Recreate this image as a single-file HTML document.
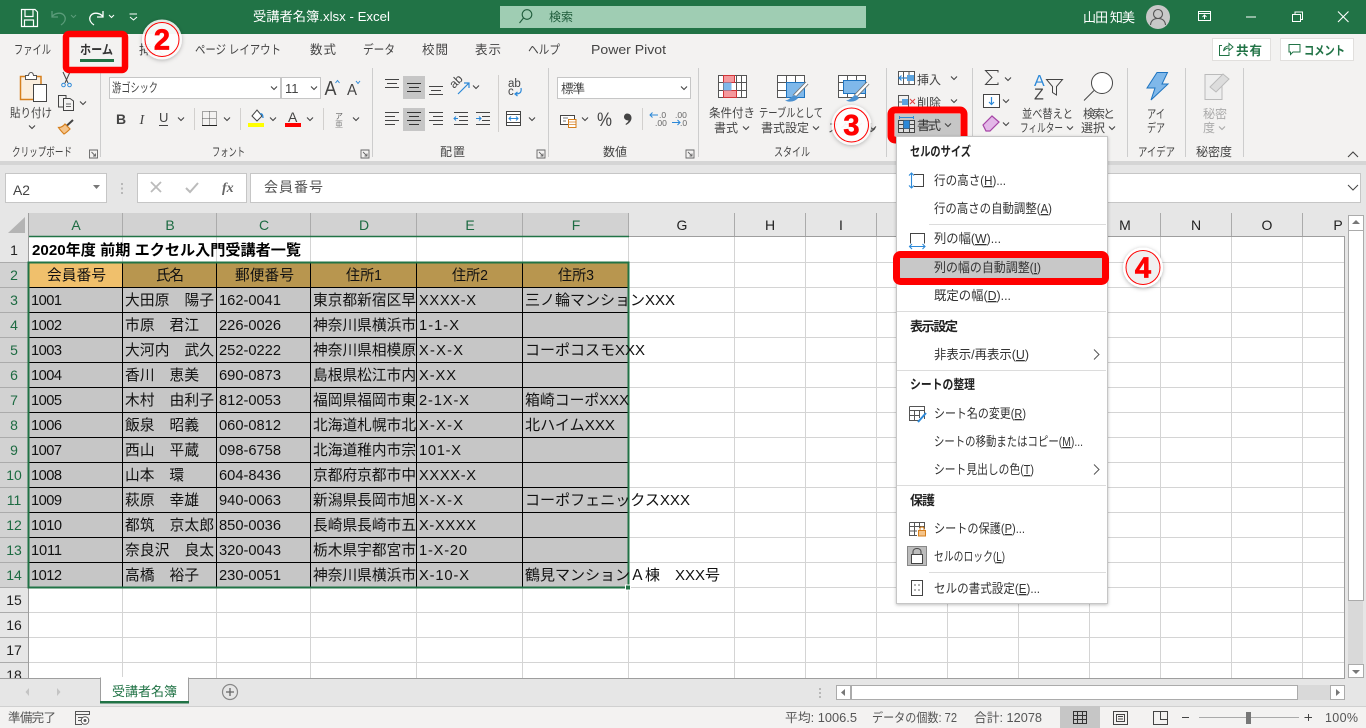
<!DOCTYPE html>
<html lang="ja"><head><meta charset="utf-8"><title>受講者名簿.xlsx - Excel</title>
<style>
html,body{margin:0;padding:0;width:1366px;height:728px;overflow:hidden;background:#fff}
svg{display:block}
text{font-family:"Liberation Sans","Noto Sans CJK JP",sans-serif;fill:#444;font-size:12px}
.w{fill:#fff;font-size:13px}
.t{font-size:12.5px;fill:#444}
.g{font-size:12px;fill:#444}
.c{font-size:14.67px;fill:#111}
.ch{font-size:14px;fill:#222;text-anchor:middle}
.chs{font-size:14px;fill:#1d6b42;text-anchor:middle}
.rh{font-size:14px;fill:#222;text-anchor:middle}
.rhs{font-size:14px;fill:#1d6b42;text-anchor:middle}
.m{font-size:13px;fill:#333}
.mb{font-size:13px;fill:#222;font-weight:bold}
.s{font-size:12.5px;fill:#555}
.u{text-decoration:underline}
.num{font-family:"Liberation Sans",sans-serif;font-weight:bold;fill:#f00;font-size:29px;text-anchor:middle;stroke:#f00;stroke-width:.7px}
</style></head><body>
<svg width="1366" height="728" viewBox="0 0 1366 728" xmlns="http://www.w3.org/2000/svg">
<defs>
<path id="cv" d="M-3 -1.5L0 1.5L3 -1.5" fill="none" stroke="#444" stroke-width="1.1"/>
<path id="cvg" d="M-3 -1.5L0 1.5L3 -1.5" fill="none" stroke="#aaa" stroke-width="1.1"/>
<path id="lau" d="M0 0H8V8H0ZM2 2L6 6M6 3.5V6H3.5" fill="none" stroke="#666" stroke-width=".9"/>
<filter id="sh" x="-30%" y="-30%" width="160%" height="160%"><feDropShadow dx="0" dy="1" stdDeviation="2" flood-color="#000" flood-opacity=".3"/></filter>
<filter id="ms" x="-5%" y="-5%" width="110%" height="110%"><feDropShadow dx="0" dy="1" stdDeviation="1.5" flood-color="#000" flood-opacity=".25"/></filter>
</defs>

<!-- backgrounds -->
<rect width="1366" height="728" fill="#e6e6e6"/>
<rect y="0" width="1366" height="34" fill="#217346"/>
<rect y="34" width="1366" height="127" fill="#f3f2f1"/>
<rect y="161" width="1366" height="4" fill="#d5d5d5"/>
<rect y="165" width="1366" height="48" fill="#e6e6e6"/>

<!-- title bar -->
<path d="M21.500 9.500H35L37.500 12V26.500H21.500ZM25 9.500V16.500H33V9.500M24.500 26.500V20H33.500V26.500" fill="none" stroke="#fff" stroke-width="1.200"/>
<path d="M52 11V17H58M52 16.500C56 12 63 12 65 17C66 20 64 23 61 25" fill="none" stroke="#5b9c7a" stroke-width="1.300"/>
<path d="M71 15l2.500 2.500L76 15" fill="none" stroke="#5b9c7a"/>
<path d="M103 11V17H97M103 16.500C99 12 92 12 90 17C89 20 91 23 94 25" fill="none" stroke="#fff" stroke-width="1.300"/>
<path d="M109 15l2.500 2.500L114 15" fill="none" stroke="#fff"/>
<path d="M129.500 14H137M130 17l3.500 3L137 17" fill="none" stroke="#fff"/>
<text x="253" y="21" class="w" textLength="137" lengthAdjust="spacingAndGlyphs">受講者名簿.xlsx  -  Excel</text>
<rect x="500" y="6" width="366" height="22" fill="#9fcdb3"/>
<circle cx="527" cy="14.500" r="4.800" fill="none" stroke="#1f5c3b" stroke-width="1.100"/>
<path d="M523.500 18L519.500 23" stroke="#1f5c3b" stroke-width="1.100"/>
<text x="549" y="21" style="font-size:12px;fill:#1f5c3b" textLength="24">検索</text>
<text x="1083" y="22" class="w" textLength="52">山田 知美</text>
<circle cx="1158" cy="17" r="12" fill="#c8c8c8"/>
<circle cx="1158" cy="14" r="4.500" fill="none" stroke="#555" stroke-width="1.100"/>
<path d="M1150.500 25C1151 20 1154 18.500 1158 18.500S1165 20 1165.500 25" fill="none" stroke="#555" stroke-width="1.100"/>
<path d="M1198.500 11.500H1210.500V20.500H1198.500ZM1198.500 13.500H1210.500M1204.500 19V15M1202.500 17L1204.500 15L1206.500 17" fill="none" stroke="#fff"/>
<path d="M1246 17H1256" stroke="#fff"/>
<path d="M1292.500 14.500H1300.500V21.500H1292.500ZM1295 14.500V12H1302.500V19.500H1300.500" fill="none" stroke="#fff"/>
<path d="M1338 11.500L1348.500 22M1348.500 11.500L1338 22" stroke="#fff" stroke-width="1.100"/>

<!-- tabs -->
<text x="14" y="54" class="t" textLength="37" lengthAdjust="spacingAndGlyphs">ファイル</text>
<text x="80" y="54" class="t" style="font-weight:bold;fill:#333" textLength="33" lengthAdjust="spacingAndGlyphs">ホーム</text>
<rect x="80" y="59" width="34" height="3" fill="#217346"/>
<text x="139" y="54" class="t" textLength="25" lengthAdjust="spacingAndGlyphs">挿入</text>
<text x="195" y="54" class="t" textLength="86" lengthAdjust="spacingAndGlyphs">ページ レイアウト</text>
<text x="310" y="54" class="t" textLength="26">数式</text>
<text x="363" y="54" class="t" textLength="32" lengthAdjust="spacingAndGlyphs">データ</text>
<text x="422" y="54" class="t" textLength="26">校閲</text>
<text x="475" y="54" class="t" textLength="26">表示</text>
<text x="528" y="54" class="t" textLength="32" lengthAdjust="spacingAndGlyphs">ヘルプ</text>
<text x="591" y="54" class="t" textLength="75" lengthAdjust="spacingAndGlyphs">Power Pivot</text>
<rect x="1212.500" y="38.500" width="58" height="22" fill="#fff" stroke="#e1dfdd"/>
<path d="M1222 45.500H1219.500V55.500H1229V52M1223.500 51C1224 47.500 1226 46 1229 46V43.500L1233 47L1229 50.500V48C1227 48 1225 49 1223.500 51Z" fill="none" stroke="#217346"/>
<text x="1236" y="55" style="font-size:12.500px;font-weight:bold;fill:#217346" textLength="26">共有</text>
<rect x="1280.500" y="38.500" width="73" height="22" fill="#fff" stroke="#e1dfdd"/>
<path d="M1289 44.500H1300V52H1293L1290.500 54.500V52H1289Z" fill="none" stroke="#217346"/>
<text x="1304" y="55" style="font-size:12.500px;font-weight:bold;fill:#217346" textLength="41" lengthAdjust="spacingAndGlyphs">コメント</text>

<!-- group separators -->
<path d="M100.500 68V157M372.500 68V157M548.500 68V157M698.500 68V157M886.500 68V157M972.500 68V157M1127.500 68V157M1185.500 68V157M1243.500 68V157" stroke="#cdcdcd"/>
<path d="M194.500 108V130M240.500 108V130M323.500 108V130M498.500 75V132M642.500 108V130" stroke="#d2d0ce"/>

<!-- clipboard -->
<path d="M20.500 76.500H41V99.500H20.500Z" fill="#fbeedd" stroke="#d67f1c" stroke-width="1.500"/>
<path d="M25.500 79.500V75.500H28.500C29 71.500 33 71.500 33.500 75.500H36.500V79.500Z" fill="#fff" stroke="#555"/>
<rect x="33.500" y="84.500" width="13" height="17" fill="#fff" stroke="#444"/>
<text x="10" y="117" class="g" textLength="42" lengthAdjust="spacingAndGlyphs">貼り付け</text>
<use href="#cv" x="32" y="127"/>
<path d="M63 72L68 83M70 72L65 83" stroke="#444"/><circle cx="63.500" cy="85" r="1.800" fill="none" stroke="#2b88d8"/><circle cx="69.500" cy="85" r="1.800" fill="none" stroke="#2b88d8"/>
<path d="M63 107H58.500V95.500H66V98M63 98.500H70L73.500 101V110.500H63.500V98.500Z" fill="#f3f2f1" stroke="#444"/><path d="M66 104H71M66 106.500H71" stroke="#666"/>
<use href="#cv" x="83" y="103"/>
<path d="M73 120L67 125.500" stroke="#444" stroke-width="2"/><path d="M58.500 127.500C61 127.500 63 126.500 65 124L70 129C68 131 66 133 64 134C62 132 60 130 58.500 127.500Z" fill="#f5c48a" stroke="#d67f1c" stroke-width="1.200"/>
<text x="12" y="156" class="g" textLength="60" lengthAdjust="spacingAndGlyphs">クリップボード</text>
<use href="#lau" x="89.500" y="150"/>

<!-- font -->
<rect x="109.500" y="77.500" width="171" height="21" fill="#fff" stroke="#c6c6c6"/>
<rect x="281.500" y="77.500" width="39" height="21" fill="#fff" stroke="#c6c6c6"/>
<text x="112" y="92" style="font-size:12.500px;fill:#444" textLength="46" lengthAdjust="spacingAndGlyphs">游ゴシック</text>
<use href="#cv" x="274" y="88"/>
<text x="285" y="93" style="font-size:13px;fill:#444">11</text>
<use href="#cv" x="314" y="88"/>
<text x="324.500" y="95" style="font-size:20px;fill:#444" textLength="12" lengthAdjust="spacingAndGlyphs">A</text>
<path d="M335.500 83l2 -2.500l2 2.500" fill="none" stroke="#2b88d8"/>
<text x="347" y="95" style="font-size:16px;fill:#444" textLength="10" lengthAdjust="spacingAndGlyphs">A</text>
<path d="M356 81l2 2.500l2 -2.500" fill="none" stroke="#2b88d8"/>
<text x="116" y="124" style="font-size:14px;font-weight:bold;fill:#444">B</text>
<text x="139.500" y="124" style="font-size:14px;font-style:italic;fill:#444;font-family:'Liberation Serif',serif">I</text>
<text x="159" y="122" style="font-size:13px;fill:#444">U</text><path d="M159 125.500H168" stroke="#444"/>
<use href="#cv" x="181" y="119"/>
<path d="M202.500 111.500H216.500V125.500H202.500ZM209.500 111.500V125.500M202.500 118.500H216.500" fill="none" stroke="#555" stroke-dasharray="1 1"/><path d="M202 125.500H217" stroke="#222"/>
<use href="#cv" x="227" y="119"/>
<path d="M252 116L257 110L262 116L257 121Z" fill="#fff" stroke="#444"/><path d="M260 114C262 113 263 115 263 118" stroke="#2b88d8" fill="none" stroke-width="1.300"/>
<rect x="248" y="123" width="16" height="4" fill="#ff0"/>
<use href="#cv" x="273" y="119"/>
<text x="288" y="122" style="font-size:14px;fill:#444">A</text>
<rect x="285" y="123" width="16" height="4" fill="#f00"/>
<use href="#cv" x="310" y="119"/>
<text x="335" y="119" style="font-size:8px;fill:#666">ア</text><text x="335" y="127" style="font-size:8px;fill:#888">亜</text>
<use href="#cv" x="356" y="119"/>
<text x="212" y="156" class="g" textLength="33" lengthAdjust="spacingAndGlyphs">フォント</text>
<use href="#lau" x="361" y="150"/>

<!-- alignment -->
<rect x="403" y="76" width="22" height="23" fill="#c6c6c6"/>
<rect x="403" y="108" width="22" height="23" fill="#c6c6c6"/>
<path d="M385 79.500H399M387 83.500H397M385 87.500H399" stroke="#444"/>
<path d="M407 83.500H421M409 87.500H419M407 91.500H421" stroke="#333"/>
<path d="M429 86.500H443M431 90.500H441M429 94.500H443" stroke="#444"/>
<path d="M385 112.500H399M385 116.500H395M385 120.500H399M385 124.500H395" stroke="#444"/>
<path d="M407 112.500H421M409 116.500H419M407 120.500H421M409 124.500H419" stroke="#333"/>
<path d="M429 112.500H443M433 116.500H443M429 120.500H443M433 124.500H443" stroke="#444"/>
<text x="454" y="89" style="font-size:12px;fill:#444" transform="rotate(-45 454 89)">ab</text>
<path d="M458 94L469 83M464 83H469V88" fill="none" stroke="#2b88d8" stroke-width="1.200"/>
<use href="#cv" x="476" y="87"/>
<path d="M454 112.500H468M459 116.500H468M459 120.500H468M454 124.500H468" stroke="#444"/><path d="M458 118.500H454M456 116.500L454 118.500L456 120.500" fill="none" stroke="#2b88d8"/>
<path d="M476 112.500H490M476 124.500H490M482 116.500H490M482 120.500H490" stroke="#444"/><path d="M476 118.500H481M479 116.500L481 118.500L479 120.500" fill="none" stroke="#2b88d8"/>
<text x="508" y="87" style="font-size:11.500px;fill:#444">ab</text><text x="508" y="95" style="font-size:11.500px;fill:#444">c</text>
<path d="M521 88C522 93 519 94 515 94M517.500 92L515 94L517.500 96" fill="none" stroke="#2b88d8" stroke-width="1.200"/>
<path d="M506.500 111.500H520.500V125.500H506.500ZM506.500 114.500H520.500M506.500 122.500H520.500" fill="#fff" stroke="#444"/><path d="M509 118.500H518M511 116.500L509 118.500L511 120.500M516 116.500L518 118.500L516 120.500" fill="none" stroke="#2b88d8"/>
<use href="#cv" x="532" y="119"/>
<text x="440" y="156" class="g" textLength="25">配置</text>
<use href="#lau" x="537" y="150"/>

<!-- number -->
<rect x="557.500" y="77.500" width="133" height="21" fill="#fff" stroke="#c6c6c6"/>
<text x="561" y="93" style="font-size:12.500px;fill:#444" textLength="24">標準</text>
<use href="#cv" x="684" y="88"/>
<rect x="560.500" y="115.500" width="14" height="9" fill="#fff" stroke="#444"/>
<path d="M563 118H568M563 121H566" stroke="#777"/>
<rect x="568.500" y="119.500" width="7.500" height="8" fill="#fff" stroke="#d67f1c"/>
<path d="M568.500 122H576M568.500 124.500H576" stroke="#d67f1c" stroke-width=".7"/>
<use href="#cv" x="585" y="119"/>
<text x="597" y="126" style="font-size:19px;fill:#444" textLength="15" lengthAdjust="spacingAndGlyphs">%</text>
<path d="M627 113.500C630 113.500 631.500 115.500 631.500 118C631.500 121 629 123.500 626 125L625.500 124C627 123 628.500 121.500 628.500 120.500C626 120.500 624 119 624 117C624 115 625.500 113.500 627 113.500Z" fill="#444"/>
<text x="659" y="118" style="font-size:8.500px;fill:#666">.0</text><text x="655" y="126" style="font-size:8.500px;fill:#666">.00</text>
<path d="M650 115H658M652.500 112.500L650 115L652.500 117.500" fill="none" stroke="#2b88d8"/>
<text x="675" y="118" style="font-size:8.500px;fill:#666">.00</text><text x="680" y="126" style="font-size:8.500px;fill:#666">.0</text>
<path d="M672 122.500H680M677.500 120L680 122.500L677.500 125" fill="none" stroke="#2b88d8"/>
<text x="603" y="156" class="g" textLength="24">数値</text>
<use href="#lau" x="686" y="150"/>

<!-- styles -->
<path d="M718.500 75.500H746.500V97.500H718.500ZM718.500 82.500H746.500M718.500 90.500H746.500M723.500 75.500V97.500M736.500 75.500V97.500M741.500 75.500V97.500" fill="#fff" stroke="#555"/>
<rect x="723.500" y="75.500" width="11" height="7" fill="#f4999d" stroke="#d13438"/>
<rect x="723.500" y="90.500" width="13" height="7" fill="#f4999d" stroke="#d13438"/>
<rect x="723.500" y="82.500" width="8" height="8" fill="#7fb8ea"/>
<text x="709" y="117" class="g" textLength="46" lengthAdjust="spacingAndGlyphs">条件付き</text>
<text x="714" y="132" class="g" textLength="24">書式</text>
<use href="#cv" x="746" y="128"/>
<path d="M777.500 75.500H804.500V97.500H777.500ZM777.500 82.500H804.500M777.500 90.500H804.500M786.500 75.500V97.500M795.500 75.500V97.500" fill="#fff" stroke="#555"/>
<rect x="786.500" y="82.500" width="18" height="15" fill="#7fb8ea" stroke="#1e74c0"/>
<path d="M807 83L794 96.500" stroke="#777" stroke-width="4"/><path d="M807 83L794 96.500" stroke="#fff" stroke-width="2.200"/><path d="M795 95C791 96 790 100 785 100.500C790 103 796 101 798 98Z" fill="#4a90d0"/>
<text x="759" y="117" class="g" textLength="64" lengthAdjust="spacingAndGlyphs">テーブルとして</text>
<text x="761" y="132" class="g" textLength="48">書式設定</text>
<use href="#cv" x="816" y="128"/>
<path d="M838.500 75.500H865.500V97.500H838.500ZM838.500 82.500H865.500M838.500 90.500H865.500M847.500 75.500V97.500M856.500 75.500V97.500" fill="#fff" stroke="#555"/>
<rect x="843.500" y="80.500" width="22" height="13" fill="#7fb8ea" stroke="#1e74c0"/>
<path d="M868 83L855 96.500" stroke="#777" stroke-width="4"/><path d="M868 83L855 96.500" stroke="#fff" stroke-width="2.200"/><path d="M856 95C852 96 851 100 846 100.500C851 103 857 101 859 98Z" fill="#4a90d0"/>
<text x="828" y="132" class="g">スタイル</text>
<use href="#cv" x="873" y="128"/>
<text x="774" y="156" class="g" textLength="36" lengthAdjust="spacingAndGlyphs">スタイル</text>

<!-- cells group -->
<path d="M898.500 71.500H914.500V84.500H898.500ZM898.500 78H914.500M903.500 71.500V84.500M909 71.500V84.500" fill="#fff" stroke="#555"/>
<path d="M899 78H906M901.500 75.500L899 78L901.500 80.500" fill="none" stroke="#2b88d8" stroke-width="1.200"/><rect x="907" y="75" width="7" height="6" fill="#5ba4e0"/>
<text x="917" y="84" class="g" textLength="24">挿入</text><use href="#cv" x="954" y="78"/>
<path d="M898.500 95.500H908.500V108.500H898.500ZM898.500 102H908.500" fill="none" stroke="#555"/>
<rect x="902" y="99" width="6" height="6" fill="#5ba4e0"/><path d="M910 99L915 104M915 99L910 104" stroke="#e04040"/>
<text x="917" y="107" class="g" textLength="24">削除</text><use href="#cv" x="954" y="101"/>
<rect x="891" y="110" width="73" height="30" rx="4" fill="#f3f2f1" stroke="#f00" stroke-width="7"/>
<rect x="895" y="114" width="65" height="22" fill="#c6c6c6"/>
<path d="M898.500 120.500H914.500V132.500H898.500ZM898.500 124.500H914.500M898.500 128.500H914.500M903.500 120.500V132.500M909.500 120.500V132.500" fill="#ddd" stroke="#444"/>
<rect x="903.500" y="120.500" width="6" height="8" fill="#2b88d8"/>
<path d="M900 117.500H913M899.500 116V119M913.500 116V119" stroke="#2b88d8"/>
<text x="917" y="130" style="font-size:13px;fill:#333" textLength="24">書式</text><use href="#cv" x="948" y="125"/>

<!-- editing -->
<path d="M998 72.500V70.500H985.500L992 77.500L985.500 84.500H998V82.500" fill="none" stroke="#444"/>
<use href="#cv" x="1008" y="79"/>
<rect x="983.500" y="94.500" width="16" height="13" fill="#fff" stroke="#444"/>
<path d="M991.500 97V104M989 102L991.500 104.500L994 102" fill="none" stroke="#2b88d8" stroke-width="1.200"/>
<use href="#cv" x="1006" y="101"/>
<path d="M983 125L992 116L999 122L990 131L986 131Z" fill="#e3b7e8" stroke="#a644a6" stroke-width="1.200"/>
<use href="#cv" x="1006" y="124"/>
<text x="1034" y="86" style="font-size:16px;fill:#2b88d8">A</text>
<text x="1034" y="99.500" style="font-size:16px;fill:#444">Z</text>
<path d="M1046.500 79.500H1062.500L1056.500 86.500V95L1052.500 92.500V86.500Z" fill="none" stroke="#444"/>
<text x="1022" y="118" class="g" textLength="51" lengthAdjust="spacingAndGlyphs">並べ替えと</text>
<text x="1020" y="132" class="g" textLength="43" lengthAdjust="spacingAndGlyphs">フィルター</text><use href="#cv" x="1070" y="128"/>
<circle cx="1102" cy="83" r="10.500" fill="#fff" stroke="#444"/><path d="M1094 90.500L1084 100.500" stroke="#444"/>
<text x="1083" y="118" class="g" textLength="32">検索と</text>
<text x="1081" y="132" class="g" textLength="24">選択</text><use href="#cv" x="1112" y="128"/>

<!-- ideas -->
<path d="M1157 72.500H1167.500L1162 84H1168L1151 100L1155 88H1147Z" fill="#7fb8ea" stroke="#1e74c0"/>
<text x="1147" y="118" class="g" textLength="18" lengthAdjust="spacingAndGlyphs">アイ</text>
<text x="1147" y="132" class="g" textLength="18" lengthAdjust="spacingAndGlyphs">デア</text>
<text x="1138" y="156" class="g" textLength="37" lengthAdjust="spacingAndGlyphs">アイデア</text>

<!-- sensitivity -->
<path d="M1205 74.500H1222V99.500H1205Z" fill="#eee" stroke="#bbb"/><path d="M1210 87L1223 74L1229 79L1216 92Z" fill="#ddd" stroke="#bbb"/>
<text x="1203" y="118" style="font-size:12px;fill:#aaa" textLength="24">秘密</text>
<text x="1203" y="132" style="font-size:12px;fill:#aaa" textLength="12">度</text><use href="#cvg" x="1222" y="128"/>
<text x="1196" y="156" class="g" textLength="36">秘密度</text>
<path d="M1348 157L1353 152L1358 157" fill="none" stroke="#444" stroke-width="1.100"/>

<!-- formula bar -->
<rect x="5.500" y="173.500" width="101" height="29" fill="#fff" stroke="#c6c6c6"/>
<text x="13" y="195" style="font-size:14px;fill:#444" textLength="17" lengthAdjust="spacingAndGlyphs">A2</text>
<path d="M93 185H100L96.500 189Z" fill="#777"/>
<path d="M122 183v2M122 187.500v2M122 192v2" stroke="#a8a8a8" stroke-width="1.500"/>
<rect x="137.500" y="173.500" width="109" height="29" fill="#fff" stroke="#c6c6c6"/>
<path d="M151 182L161 192M161 182L151 192" stroke="#bbb" stroke-width="1.800"/>
<path d="M186 188L190 192L198 183" fill="none" stroke="#bbb" stroke-width="2"/>
<text x="222" y="192" style="font-size:14px;font-style:italic;font-weight:bold;fill:#666;font-family:'Liberation Serif',serif">fx</text>
<rect x="250.500" y="173.500" width="1110" height="29" fill="#fff" stroke="#c6c6c6"/>
<text x="264" y="192" style="font-size:14px;fill:#555" textLength="59">会員番号</text>
<path d="M1348 185L1353 190L1358 185" fill="none" stroke="#444"/>

<!-- sheet -->
<rect x="29" y="237" width="1315" height="441" fill="#fff"/>
<rect x="0" y="213" width="1345" height="23" fill="#e6e6e6"/>
<rect x="0" y="237" width="28" height="441" fill="#e6e6e6"/>
<path d="M25 217V233H8Z" fill="#b4b4b4"/>
<rect x="29" y="213" width="600" height="23" fill="#d2d2d2"/>
<rect x="0" y="262" width="28" height="325" fill="#d2d2d2"/>
<path d="M122.500 237V678M216.500 237V678M310.500 237V678M416.500 237V678M522.500 237V678M628.500 237V678M734.500 237V678M805.500 237V678M876.500 237V678M947.500 237V678M1018.500 237V678M1089.500 237V678M1160.500 237V678M1231.500 237V678M1302.500 237V678" stroke="#d4d4d4"/>
<path d="M29 262.500H1344M29 287.500H1344M29 312.500H1344M29 337.500H1344M29 362.500H1344M29 387.500H1344M29 412.500H1344M29 437.500H1344M29 462.500H1344M29 487.500H1344M29 512.500H1344M29 537.500H1344M29 562.500H1344M29 587.500H1344M29 612.500H1344M29 637.500H1344M29 662.500H1344" stroke="#d4d4d4"/>
<path d="M122.500 213V236M216.500 213V236M310.500 213V236M416.500 213V236M522.500 213V236M628.500 213V236M734.500 213V236M805.500 213V236M876.500 213V236M947.500 213V236M1018.500 213V236M1089.500 213V236M1160.500 213V236M1231.500 213V236M1302.500 213V236" stroke="#ababab"/>
<path d="M0 262.500H28M0 287.500H28M0 312.500H28M0 337.500H28M0 362.500H28M0 387.500H28M0 412.500H28M0 437.500H28M0 462.500H28M0 487.500H28M0 512.500H28M0 537.500H28M0 562.500H28M0 587.500H28M0 612.500H28M0 637.500H28M0 662.500H28" stroke="#ababab"/>
<path d="M28.500 213V678M629 236.500H1344.500V678" fill="none" stroke="#9e9e9e"/>
<path d="M29 236.500H629" stroke="#217346" stroke-width="1.500"/>
<rect x="29" y="263" width="600" height="24" fill="#b8964f"/>
<rect x="29" y="263" width="94" height="24" fill="#f0c06c"/>
<rect x="29" y="288" width="600" height="299" fill="#c6c6c6"/>
<path d="M29 287.500H629M29 312.500H629M29 337.500H629M29 362.500H629M29 387.500H629M29 412.500H629M29 437.500H629M29 462.500H629M29 487.500H629M29 512.500H629M29 537.500H629M29 562.500H629" stroke="#000"/>
<path d="M122.500 263V587M216.500 263V587M310.500 263V587M416.500 263V587M522.500 263V587" stroke="#000"/>
<rect x="28.500" y="262.500" width="600" height="325" fill="none" stroke="#217346" stroke-width="2"/>
<rect x="625.500" y="585" width="5" height="5" fill="#217346" stroke="#fff"/>

<!-- column letters -->
<text x="76" y="230" class="chs">A</text><text x="170" y="230" class="chs">B</text><text x="264" y="230" class="chs">C</text><text x="364" y="230" class="chs">D</text><text x="470" y="230" class="chs">E</text><text x="576" y="230" class="chs">F</text>
<text x="682" y="230" class="ch">G</text><text x="770" y="230" class="ch">H</text><text x="841" y="230" class="ch">I</text><text x="912" y="230" class="ch">J</text><text x="1125" y="230" class="ch">M</text><text x="1196" y="230" class="ch">N</text><text x="1267" y="230" class="ch">O</text><text x="1338" y="230" class="ch">P</text>
<!-- row numbers -->
<text x="14" y="255" class="rh">1</text><text x="14" y="280" class="rhs">2</text><text x="14" y="305" class="rhs">3</text><text x="14" y="330" class="rhs">4</text><text x="14" y="355" class="rhs">5</text><text x="14" y="380" class="rhs">6</text><text x="14" y="405" class="rhs">7</text><text x="14" y="430" class="rhs">8</text><text x="14" y="455" class="rhs">9</text><text x="14" y="480" class="rhs">10</text><text x="14" y="505" class="rhs">11</text><text x="14" y="530" class="rhs">12</text><text x="14" y="555" class="rhs">13</text><text x="14" y="580" class="rhs">14</text><text x="14" y="605" class="rh">15</text><text x="14" y="630" class="rh">16</text><text x="14" y="655" class="rh">17</text><text x="14" y="680" class="rh">18</text>
<rect x="0" y="678" width="1366" height="28" fill="#e6e6e6"/>
<path d="M0 678.500H1345" stroke="#9e9e9e"/>

<!-- cell text -->
<text x="32" y="255" class="c" style="font-weight:bold;fill:#000" textLength="269" lengthAdjust="spacingAndGlyphs">2020年度 前期 エクセル入門受講者一覧</text>
<text x="47" y="280" class="c" textLength="59">会員番号</text><text x="156" y="280" class="c" textLength="28">氏名</text><text x="235" y="280" class="c" textLength="59">郵便番号</text><text x="346" y="280" class="c" textLength="36" lengthAdjust="spacingAndGlyphs">住所1</text><text x="452" y="280" class="c" textLength="36" lengthAdjust="spacingAndGlyphs">住所2</text><text x="558" y="280" class="c" textLength="36" lengthAdjust="spacingAndGlyphs">住所3</text>

<text x="31" y="305" class="c" textLength="31">1001</text><text x="125" y="305" class="c" textLength="89">大田原　陽子</text><text x="219" y="305" class="c" textLength="62">162-0041</text><text x="313" y="305" class="c" textLength="103">東京都新宿区早</text><text x="419" y="305" class="c" textLength="57">XXXX-X</text><text x="525" y="305" class="c" textLength="150" lengthAdjust="spacingAndGlyphs">三ノ輪マンションXXX</text>
<text x="31" y="330" class="c" textLength="31">1002</text><text x="125" y="330" class="c" textLength="74">市原　君江</text><text x="219" y="330" class="c" textLength="62">226-0026</text><text x="313" y="330" class="c" textLength="103">神奈川県横浜市</text><text x="419" y="330" class="c" textLength="40">1-1-X</text>
<text x="31" y="355" class="c" textLength="31">1003</text><text x="125" y="355" class="c" textLength="89">大河内　武久</text><text x="219" y="355" class="c" textLength="62">252-0222</text><text x="313" y="355" class="c" textLength="103">神奈川県相模原</text><text x="419" y="355" class="c" textLength="44">X-X-X</text><text x="525" y="355" class="c" textLength="120" lengthAdjust="spacingAndGlyphs">コーポコスモXXX</text>
<text x="31" y="380" class="c" textLength="31">1004</text><text x="125" y="380" class="c" textLength="74">香川　恵美</text><text x="219" y="380" class="c" textLength="62">690-0873</text><text x="313" y="380" class="c" textLength="103">島根県松江市内</text><text x="419" y="380" class="c" textLength="37">X-XX</text>
<text x="31" y="405" class="c" textLength="31">1005</text><text x="125" y="405" class="c" textLength="89">木村　由利子</text><text x="219" y="405" class="c" textLength="62">812-0053</text><text x="313" y="405" class="c" textLength="103">福岡県福岡市東</text><text x="419" y="405" class="c" textLength="50">2-1X-X</text><text x="525" y="405" class="c" textLength="104" lengthAdjust="spacingAndGlyphs">箱崎コーポXXX</text>
<text x="31" y="430" class="c" textLength="31">1006</text><text x="125" y="430" class="c" textLength="74">飯泉　昭義</text><text x="219" y="430" class="c" textLength="62">060-0812</text><text x="313" y="430" class="c" textLength="103">北海道札幌市北</text><text x="419" y="430" class="c" textLength="44">X-X-X</text><text x="525" y="430" class="c" textLength="90" lengthAdjust="spacingAndGlyphs">北ハイムXXX</text>
<text x="31" y="455" class="c" textLength="31">1007</text><text x="125" y="455" class="c" textLength="74">西山　平蔵</text><text x="219" y="455" class="c" textLength="62">098-6758</text><text x="313" y="455" class="c" textLength="103">北海道稚内市宗</text><text x="419" y="455" class="c" textLength="42">101-X</text>
<text x="31" y="480" class="c" textLength="31">1008</text><text x="125" y="480" class="c" textLength="59">山本　環</text><text x="219" y="480" class="c" textLength="62">604-8436</text><text x="313" y="480" class="c" textLength="103">京都府京都市中</text><text x="419" y="480" class="c" textLength="57">XXXX-X</text>
<text x="31" y="505" class="c" textLength="31">1009</text><text x="125" y="505" class="c" textLength="74">萩原　幸雄</text><text x="219" y="505" class="c" textLength="62">940-0063</text><text x="313" y="505" class="c" textLength="103">新潟県長岡市旭</text><text x="419" y="505" class="c" textLength="44">X-X-X</text><text x="525" y="505" class="c" textLength="165" lengthAdjust="spacingAndGlyphs">コーポフェニックスXXX</text>
<text x="31" y="530" class="c" textLength="31">1010</text><text x="125" y="530" class="c" textLength="89">都筑　京太郎</text><text x="219" y="530" class="c" textLength="62">850-0036</text><text x="313" y="530" class="c" textLength="103">長崎県長崎市五</text><text x="419" y="530" class="c" textLength="57">X-XXXX</text>
<text x="31" y="555" class="c" textLength="31">1011</text><text x="125" y="555" class="c" textLength="89">奈良沢　良太</text><text x="219" y="555" class="c" textLength="62">320-0043</text><text x="313" y="555" class="c" textLength="103">栃木県宇都宮市</text><text x="419" y="555" class="c" textLength="48">1-X-20</text>
<text x="31" y="580" class="c" textLength="31">1012</text><text x="125" y="580" class="c" textLength="74">高橋　裕子</text><text x="219" y="580" class="c" textLength="62">230-0051</text><text x="313" y="580" class="c" textLength="103">神奈川県横浜市</text><text x="419" y="580" class="c" textLength="50">X-10-X</text><text x="525" y="580" class="c" textLength="195" lengthAdjust="spacingAndGlyphs">鶴見マンションＡ棟　XXX号</text>

<!-- vertical scrollbar -->
<rect x="1348" y="230" width="15" height="434" fill="#d9d9d9"/>
<rect x="1348.500" y="215.500" width="15" height="15" fill="#fff" stroke="#ababab"/>
<path d="M1352 224H1360L1356 220Z" fill="#777"/>
<rect x="1348.500" y="230.500" width="15" height="370" fill="#fff" stroke="#ababab"/>
<rect x="1348.500" y="664.500" width="15" height="13" fill="#fff" stroke="#ababab"/>
<path d="M1352 670H1360L1356 674Z" fill="#777"/>

<!-- sheet tabs -->
<path d="M29 688L25.500 692L29 696Z" fill="#c4c4c4"/><path d="M57 688L60.500 692L57 696Z" fill="#c4c4c4"/>
<path d="M100.500 703V678H188.500V703" fill="#fff" stroke="#9e9e9e"/>
<rect x="101" y="677" width="87" height="3" fill="#fff"/>
<rect x="100" y="701" width="89" height="2.500" fill="#217346"/>
<text x="112" y="696" style="font-size:13px;fill:#217346" textLength="65">受講者名簿</text>
<circle cx="230" cy="692" r="7.500" fill="none" stroke="#888" stroke-width="1.200"/><path d="M226 692H234M230 688V696" stroke="#666" stroke-width="1.300"/>
<path d="M820 688v2M820 692v2M820 696v2" stroke="#a8a8a8" stroke-width="1.500"/>

<!-- horizontal scrollbar -->
<rect x="836" y="685" width="494" height="15" fill="#d9d9d9"/>
<rect x="836.500" y="685.500" width="14" height="14" fill="#fff" stroke="#ababab"/>
<path d="M845 689V696L841 692.500Z" fill="#777"/>
<rect x="851.500" y="685.500" width="446" height="14" fill="#fff" stroke="#ababab"/>
<rect x="1330.500" y="685.500" width="14" height="14" fill="#fff" stroke="#ababab"/>
<path d="M1336 689V696L1340 692.500Z" fill="#777"/>

<!-- status bar -->
<rect y="706" width="1366" height="22" fill="#f3f2f1"/><path d="M0 706.500H1366" stroke="#d0d0d0"/>
<text x="8" y="722" class="s" textLength="48">準備完了</text>
<path d="M75.500 711.500H89.500V714.500H75.500ZM75.500 714.500V724.500H82M78 717.500H83M78 720.500H81" fill="none" stroke="#555"/><circle cx="85" cy="720.500" r="3.800" fill="#fff" stroke="#555"/><circle cx="85" cy="720.500" r="1.500" fill="#555"/>
<text x="785" y="722" class="s" textLength="72" lengthAdjust="spacingAndGlyphs">平均: 1006.5</text>
<text x="872" y="722" class="s" textLength="85" lengthAdjust="spacingAndGlyphs">データの個数: 72</text>
<text x="974" y="722" class="s" textLength="68" lengthAdjust="spacingAndGlyphs">合計: 12078</text>
<rect x="1060" y="706" width="40" height="22" fill="#c6c6c6"/>
<path d="M1073.500 711.500H1086.500V723.500H1073.500ZM1073.500 715.500H1086.500M1073.500 719.500H1086.500M1077.500 711.500V723.500M1082.500 711.500V723.500" fill="none" stroke="#333"/>
<path d="M1113.500 711.500H1127.500V724.500H1113.500ZM1116.500 714.500H1124.500V721.500H1116.500ZM1118 716.500H1123M1118 719H1123" fill="none" stroke="#444"/>
<path d="M1153.500 711.500H1167.500V724.500H1153.500ZM1160.500 711.500V719.500H1167.500" fill="none" stroke="#444"/>
<path d="M1182 717.500H1189M1304.500 717.500H1312M1308.500 714V721" stroke="#444"/>
<path d="M1199 717.500H1299" stroke="#aaa"/>
<rect x="1246" y="712" width="5" height="12" fill="#777"/>
<text x="1325" y="722" class="s" textLength="33">100%</text>

<!-- red callout -->
<rect x="66" y="34" width="59" height="36" rx="3" fill="none" stroke="#f00" stroke-width="6.500"/>

<!-- dropdown menu -->
<rect x="896.500" y="136.500" width="211" height="467" fill="#fff" stroke="#c6c6c6" filter="url(#ms)"/>
<text x="910" y="156" class="mb" textLength="61" lengthAdjust="spacingAndGlyphs">セルのサイズ</text>
<path d="M911.500 173V188M909 175.500L911.500 173L914 175.500M909 185.500L911.500 188L914 185.500" fill="none" stroke="#2b88d8" stroke-width="1.100"/>
<path d="M914 174.500H923.500V186.500H914" fill="none" stroke="#444"/>
<text x="934" y="185" class="m" textLength="72" lengthAdjust="spacingAndGlyphs">行の高さ(<tspan class="u">H</tspan>)...</text>
<text x="934" y="213" class="m" textLength="118" lengthAdjust="spacingAndGlyphs">行の高さの自動調整(<tspan class="u">A</tspan>)</text>
<path d="M929 224.500H1106" stroke="#dcdcdc"/>
<path d="M910.500 243.500V233.500H924.500V243.500" fill="none" stroke="#444"/>
<path d="M909.500 246.500H925M912 244L909.500 246.500L912 249M922.500 244L925 246.500L922.500 249" fill="none" stroke="#2b88d8" stroke-width="1.100"/>
<text x="934" y="243" class="m" textLength="67" lengthAdjust="spacingAndGlyphs">列の幅(<tspan class="u">W</tspan>)...</text>
<rect x="896.500" y="254.500" width="209" height="27" rx="4" fill="#c8c8c8" stroke="#f00" stroke-width="7"/>
<text x="934" y="272" class="m" textLength="107" lengthAdjust="spacingAndGlyphs">列の幅の自動調整(<tspan class="u">I</tspan>)</text>
<text x="934" y="300" class="m" textLength="77" lengthAdjust="spacingAndGlyphs">既定の幅(<tspan class="u">D</tspan>)...</text>
<path d="M897 311.500H1106" stroke="#dcdcdc"/>
<text x="910" y="331" class="mb" textLength="48">表示設定</text>
<text x="934" y="359" class="m" textLength="95" lengthAdjust="spacingAndGlyphs">非表示/再表示(<tspan class="u">U</tspan>)</text>
<path d="M1094 349.500L1099 354.500L1094 359.500" fill="none" stroke="#555"/>
<path d="M897 370.500H1106" stroke="#dcdcdc"/>
<text x="910" y="389" class="mb" textLength="65" lengthAdjust="spacingAndGlyphs">シートの整理</text>
<path d="M909.500 406.500H924.500V419M909.500 406.500V420.500H919M909.500 410.500H924.500M909.500 415.500H920M914.500 410.500V420.500M919.500 410.500V418" fill="none" stroke="#555"/>
<path d="M918 422L926 413" stroke="#2b88d8" stroke-width="2"/>
<text x="934" y="418" class="m" textLength="92" lengthAdjust="spacingAndGlyphs">シート名の変更(<tspan class="u">R</tspan>)</text>
<text x="934" y="446" class="m" textLength="149" lengthAdjust="spacingAndGlyphs">シートの移動またはコピー(<tspan class="u">M</tspan>)...</text>
<text x="934" y="474" class="m" textLength="100" lengthAdjust="spacingAndGlyphs">シート見出しの色(<tspan class="u">T</tspan>)</text>
<path d="M1094 464.500L1099 469.500L1094 474.500" fill="none" stroke="#555"/>
<path d="M897 485.500H1106" stroke="#dcdcdc"/>
<text x="910" y="505" class="mb" textLength="25">保護</text>
<path d="M909.500 522.500H924.500V529M909.500 522.500V535.500H917M909.500 526.500H924.500M909.500 531H917M914.500 522.500V535.500M919.500 522.500V528" fill="none" stroke="#555"/>
<rect x="918.500" y="530.500" width="7" height="5.500" fill="#f5c48a" stroke="#d67f1c"/><path d="M920 530.500V528.500C920 526.500 924 526.500 924 528.500V530.500" fill="none" stroke="#d67f1c"/>
<text x="934" y="533" class="m" textLength="91" lengthAdjust="spacingAndGlyphs">シートの保護(<tspan class="u">P</tspan>)...</text>
<rect x="907.500" y="546.500" width="19" height="19" fill="#bdbdbd" stroke="#888"/>
<rect x="911.500" y="554.500" width="11" height="9" fill="#fff" stroke="#444"/><path d="M913 554.500V551.500C913 547.500 921 547.500 921 551.500V554.500" fill="none" stroke="#444"/>
<text x="934" y="561" class="m" textLength="71" lengthAdjust="spacingAndGlyphs">セルのロック(<tspan class="u">L</tspan>)</text>
<path d="M929 572.500H1106" stroke="#dcdcdc"/>
<rect x="911.500" y="580.500" width="11" height="15" fill="#fff" stroke="#444"/><path d="M914 585H916M918 585H920M914 590H916M918 590H920" stroke="#666"/>
<text x="934" y="593" class="m" textLength="106" lengthAdjust="spacingAndGlyphs">セルの書式設定(<tspan class="u">E</tspan>)...</text>

<!-- numbered circles -->
<circle cx="162" cy="39.500" r="20" fill="#fff" fill-opacity=".85" filter="url(#sh)"/><circle cx="162" cy="39.500" r="17" fill="#fff" fill-opacity=".6" stroke="#f00"/><text x="162" y="49.500" class="num">2</text>
<circle cx="851.500" cy="125" r="20" fill="#fff" fill-opacity=".85" filter="url(#sh)"/><circle cx="851.500" cy="125" r="17" fill="#fff" fill-opacity=".6" stroke="#f00"/><text x="851.500" y="135" class="num">3</text>
<circle cx="1143" cy="267.500" r="20" fill="#fff" filter="url(#sh)"/><circle cx="1143" cy="267.500" r="17" fill="#f0f0f0" stroke="#f00"/><text x="1143" y="277.500" class="num">4</text>
</svg>
</body></html>
